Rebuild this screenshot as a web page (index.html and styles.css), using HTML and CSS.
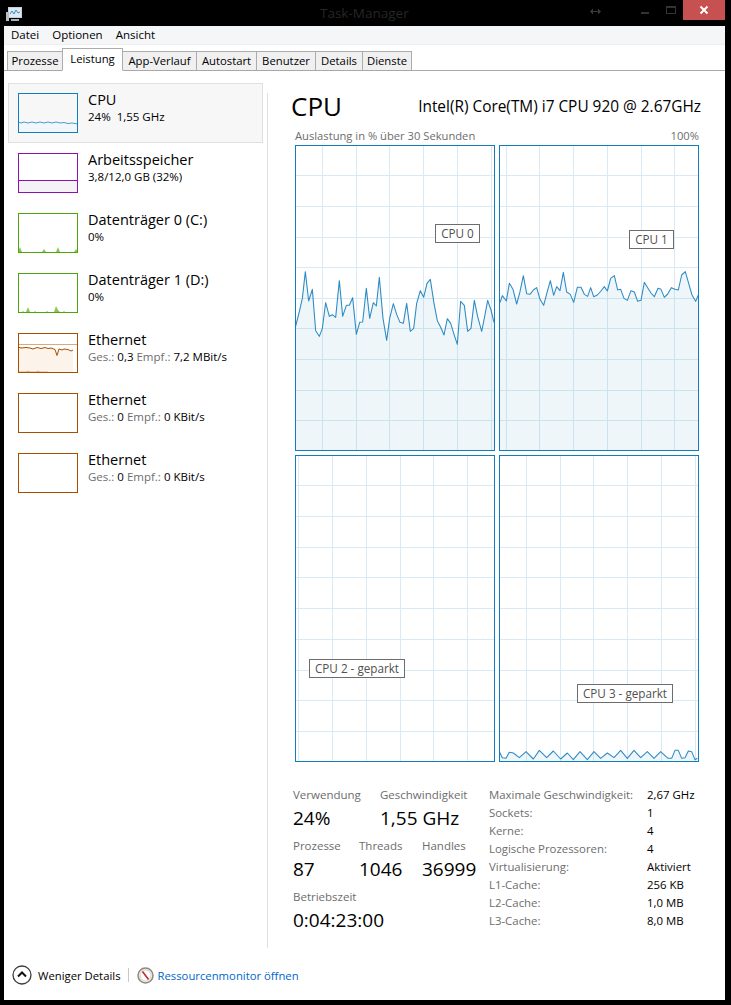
FILE: index.html
```html
<!DOCTYPE html>
<html lang="de">
<head>
<meta charset="utf-8">
<title>Task-Manager</title>
<link rel="stylesheet" href="styles.css">
</head>
<body>
<div class="window">
  <header class="titlebar">
    <svg class="app-icon" width="16" height="15" viewBox="0 0 16 15"><rect x="2.5" y="0.5" width="13" height="10" fill="#dfe8f0" stroke="#c8d0d8"/><path d="M4 7l2-3 2 3 2-4 2 3 2-1" fill="none" stroke="#3a8fc8"/><rect x="0" y="5" width="3" height="9" fill="#b9bec4"/><rect x="5" y="12" width="8" height="2" fill="#aab0b6"/></svg>
    <span class="title">Task-Manager</span>
    <svg class="resize" width="11" height="7" viewBox="0 0 11 7"><path d="M0 3.5L3 .5V3h5V.5l3 3-3 3V4H3v2.5z" fill="#3a3a3a"/></svg>
    <span class="min"></span>
    <span class="max"></span>
    <span class="close"><svg width="10" height="10" viewBox="0 0 10 10"><path d="M1.5 1.5l7 7M8.5 1.5l-7 7" stroke="#fff" stroke-width="2" fill="none"/></svg></span>
  </header>
  <main class="client">
    <nav class="menu"><span>Datei</span><span>Optionen</span><span>Ansicht</span></nav>
    <div class="tabs">
      <span class="tab">Prozesse</span>
      <span class="tab active">Leistung</span>
      <span class="tab">App-Verlauf</span>
      <span class="tab">Autostart</span>
      <span class="tab">Benutzer</span>
      <span class="tab">Details</span>
      <span class="tab">Dienste</span>
    </div>
    <div class="content">
      <aside class="sidebar">
        <div class="res selected">
          <svg class="thumb" width="60" height="40" viewBox="0 0 60 40"><path class="f-cpu" d="M0 29l3 1 3-1 4 1 4-1 4 1 4-1 4 1 4-1 4 1 4-1 4 1 4-.5 4 1 4-.5 6 1V40H0z"/><path class="l-cpu" d="M0 29l3 1 3-1 4 1 4-1 4 1 4-1 4 1 4-1 4 1 4-1 4 1 4-.5 4 1 4-.5 6 1"/><rect class="b-cpu" x=".5" y=".5" width="59" height="39"/></svg>
          <div class="res-text"><div class="res-name">CPU</div><div class="res-sub">24%&nbsp; 1,55 GHz</div></div>
        </div>
        <div class="res">
          <svg class="thumb" width="60" height="40" viewBox="0 0 60 40"><rect x="0" y="27" width="60" height="13" fill="#f4f2f4"/><path d="M0 27.5H60" stroke="#8b12ae"/><rect class="b-mem" x=".5" y=".5" width="59" height="39"/></svg>
          <div class="res-text"><div class="res-name">Arbeitsspeicher</div><div class="res-sub">3,8/12,0 GB (32%)</div></div>
        </div>
        <div class="res">
          <svg class="thumb" width="60" height="40" viewBox="0 0 60 40"><path d="M0 39l2-5 2 5h20l2-3 2 3h10l2-5 2 5h14l2-3 2 3z" fill="#8cc653"/><rect class="b-disk" x=".5" y=".5" width="59" height="39"/></svg>
          <div class="res-text"><div class="res-name">Datenträger 0 (C:)</div><div class="res-sub">0%</div></div>
        </div>
        <div class="res">
          <svg class="thumb" width="60" height="40" viewBox="0 0 60 40"><path d="M0 39h4l1-1 1 1h2l2-5 2 5h4l1-1 1 1h10l1-1 1 1h6l2-6 2 4 2 2h3l1-1 1 1h8z" fill="#8cc653"/><rect class="b-disk" x=".5" y=".5" width="59" height="39"/></svg>
          <div class="res-text"><div class="res-name">Datenträger 1 (D:)</div><div class="res-sub">0%</div></div>
        </div>
        <div class="res">
          <svg class="thumb" width="60" height="40" viewBox="0 0 60 40"><path d="M0 14l3 1 5-.5 4 .5 3 1 4-1.500 4 1 4-1 3 1 3-.5 4 1.500 2 6 2-6.500 3 1 2-1 4 .5 3 1.500 2-1V40H0z" fill="#fcf3eb"/><path d="M0 11.500H60" stroke="#d9aa7f"/><path d="M0 14l3 1 5-.5 4 .5 3 1 4-1.500 4 1 4-1 3 1 3-.5 4 1.500 2 6 2-6.500 3 1 2-1 4 .5 3 1.500 2-1" fill="none" stroke="#a74f01"/><path d="M1 39h7l2-1 2 1h6l2-1 2 1h8" fill="none" stroke="#d9aa7f"/><rect class="b-net" x=".5" y=".5" width="59" height="39"/></svg>
          <div class="res-text"><div class="res-name">Ethernet</div><div class="res-sub"><span class="dim">Ges.:</span> 0,3 <span class="dim">Empf.:</span> 7,2 MBit/s</div></div>
        </div>
        <div class="res">
          <svg class="thumb" width="60" height="40" viewBox="0 0 60 40"><rect class="b-net" x=".5" y=".5" width="59" height="39"/></svg>
          <div class="res-text"><div class="res-name">Ethernet</div><div class="res-sub"><span class="dim">Ges.:</span> 0 <span class="dim">Empf.:</span> 0 KBit/s</div></div>
        </div>
        <div class="res">
          <svg class="thumb" width="60" height="40" viewBox="0 0 60 40"><rect class="b-net" x=".5" y=".5" width="59" height="39"/></svg>
          <div class="res-text"><div class="res-name">Ethernet</div><div class="res-sub"><span class="dim">Ges.:</span> 0 <span class="dim">Empf.:</span> 0 KBit/s</div></div>
        </div>
      </aside>
      <section class="panel">
        <div class="panel-head">
          <h1>CPU</h1>
          <div class="model">Intel(R) Core(TM) i7 CPU 920 @ 2.67GHz</div>
        </div>
        <div class="caption"><span>Auslastung in % über 30 Sekunden</span><span>100%</span></div>
        <div class="charts">
          <div class="chart">
            <svg width="200" height="306" viewBox="0 0 200 306">
              <path class="grid" d="M27.5 0V306M61.500 0V306M94.500 0V306M128.500 0V306M162.500 0V306M196.500 0V306M0 30.500H200M0 61.500H200M0 92.500H200M0 122.500H200M0 153.500H200M0 183.500H200M0 214.500H200M0 245.500H200M0 275.500H200"/>
              <g transform="translate(-5 75) scale(.33333)">
                <polygon class="area" points="17,318 28,275 37,235 46,155 56,243 67,208 77,332 88,349 97,325 107,248 118,289 127,284 137,292 148,182 158,289 169,256 178,256 188,233 199,343 209,307 218,306 229,205 239,295 250,248 259,258 268,172 279,295 290,361 299,295 310,251 320,283 330,307 340,310 350,250 361,334 371,325 380,250 391,212 401,232 411,190 421,178 432,250 442,302 452,322 462,345 472,296 482,310 492,343 502,373 512,244 523,256 533,334 543,325 553,241 563,290 575,334 584,290 593,241 603,270 612,307 612,693 17,693"/>
                <polyline class="trace" points="17,318 28,275 37,235 46,155 56,243 67,208 77,332 88,349 97,325 107,248 118,289 127,284 137,292 148,182 158,289 169,256 178,256 188,233 199,343 209,307 218,306 229,205 239,295 250,248 259,258 268,172 279,295 290,361 299,295 310,251 320,283 330,307 340,310 350,250 361,334 371,325 380,250 391,212 401,232 411,190 421,178 432,250 442,302 452,322 462,345 472,296 482,310 492,343 502,373 512,244 523,256 533,334 543,325 553,241 563,290 575,334 584,290 593,241 603,270 612,307"/>
              </g>
              <rect class="frame" x=".5" y=".5" width="199" height="305"/>
            </svg>
            <span class="chart-label l0">CPU 0</span>
          </div>
          <div class="chart">
            <svg width="200" height="306" viewBox="0 0 200 306">
              <path class="grid" d="M7.500 0V306M40.500 0V306M74.500 0V306M108.500 0V306M142.500 0V306M175.500 0V306M0 30.500H200M0 61.500H200M0 92.500H200M0 122.500H200M0 153.500H200M0 183.500H200M0 214.500H200M0 245.500H200M0 275.500H200"/>
              <g transform="translate(-4 75) scale(.33333)">
                <polygon class="area" points="15,248 22,227 34,243 43,190 54,208 65,252 75,215 85,167 95,221 105,223 115,210 125,203 135,238 146,256 156,218 166,182 176,226 185,200 195,212 205,157 215,216 226,223 236,247 247,202 258,202 268,223 278,229 287,203 296,230 307,225 318,213 328,200 337,213 347,175 358,167 368,210 377,208 387,235 397,241 408,212 418,216 428,244 438,241 448,187 458,203 468,219 478,230 489,205 498,208 508,232 518,222 529,203 540,208 550,210 560,165 571,155 581,190 591,225 602,244 610,225 610,693 15,693"/>
                <polyline class="trace" points="15,248 22,227 34,243 43,190 54,208 65,252 75,215 85,167 95,221 105,223 115,210 125,203 135,238 146,256 156,218 166,182 176,226 185,200 195,212 205,157 215,216 226,223 236,247 247,202 258,202 268,223 278,229 287,203 296,230 307,225 318,213 328,200 337,213 347,175 358,167 368,210 377,208 387,235 397,241 408,212 418,216 428,244 438,241 448,187 458,203 468,219 478,230 489,205 498,208 508,232 518,222 529,203 540,208 550,210 560,165 571,155 581,190 591,225 602,244 610,225"/>
              </g>
              <rect class="frame" x=".5" y=".5" width="199" height="305"/>
            </svg>
            <span class="chart-label l1">CPU 1</span>
          </div>
          <div class="chart">
            <svg width="200" height="307" viewBox="0 0 200 307">
              <path class="grid" d="M3.500 0V307M37.500 0V307M71.500 0V307M105.500 0V307M138.500 0V307M172.500 0V307M0 30.500H200M0 61.500H200M0 92.500H200M0 122.500H200M0 153.500H200M0 184.500H200M0 215.500H200M0 245.500H200M0 276.500H200"/>
              <rect class="frame" x=".5" y=".5" width="199" height="306"/>
            </svg>
            <span class="chart-label l2">CPU 2 - geparkt</span>
          </div>
          <div class="chart">
            <svg width="200" height="307" viewBox="0 0 200 307">
              <path class="grid" d="M27.500 0V307M61.500 0V307M94.500 0V307M128.500 0V307M162.500 0V307M196.500 0V307M0 30.500H200M0 61.500H200M0 92.500H200M0 122.500H200M0 153.500H200M0 184.500H200M0 215.500H200M0 245.500H200M0 276.500H200"/>
              <g transform="translate(-4 290) scale(.33333)">
                <polygon class="area" points="14,22 22,38 33,40 43,22 55,24 73,38 93,20 115,42 133,16 155,38 175,18 197,42 217,24 235,44 255,20 277,44 297,20 317,40 337,24 357,38 377,16 397,40 417,16 437,38 457,20 477,40 497,20 519,40 530,40 540,16 550,16 560,40 570,38 580,18 590,20 600,44 607,40 607,51 14,51"/>
                <polyline class="trace" points="14,22 22,38 33,40 43,22 55,24 73,38 93,20 115,42 133,16 155,38 175,18 197,42 217,24 235,44 255,20 277,44 297,20 317,40 337,24 357,38 377,16 397,40 417,16 437,38 457,20 477,40 497,20 519,40 530,40 540,16 550,16 560,40 570,38 580,18 590,20 600,44 607,40"/>
              </g>
              <rect class="frame" x=".5" y=".5" width="199" height="306"/>
            </svg>
            <span class="chart-label l3">CPU 3 - geparkt</span>
          </div>
        </div>
        <div class="stats">
          <div class="live">
            <div class="live-row">
              <div class="stat w87"><div class="s-label">Verwendung</div><div class="s-value">24%</div></div>
              <div class="stat"><div class="s-label">Geschwindigkeit</div><div class="s-value">1,55 GHz</div></div>
            </div>
            <div class="live-row">
              <div class="stat w66"><div class="s-label">Prozesse</div><div class="s-value">87</div></div>
              <div class="stat w63"><div class="s-label">Threads</div><div class="s-value">1046</div></div>
              <div class="stat"><div class="s-label">Handles</div><div class="s-value">36999</div></div>
            </div>
            <div class="live-row">
              <div class="stat"><div class="s-label">Betriebszeit</div><div class="s-value">0:04:23:00</div></div>
            </div>
          </div>
          <dl class="specs">
            <dt>Maximale Geschwindigkeit:</dt><dd>2,67 GHz</dd>
            <dt>Sockets:</dt><dd>1</dd>
            <dt>Kerne:</dt><dd>4</dd>
            <dt>Logische Prozessoren:</dt><dd>4</dd>
            <dt>Virtualisierung:</dt><dd>Aktiviert</dd>
            <dt>L1-Cache:</dt><dd>256 KB</dd>
            <dt>L2-Cache:</dt><dd>1,0 MB</dd>
            <dt>L3-Cache:</dt><dd>8,0 MB</dd>
          </dl>
        </div>
      </section>
    </div>
    <footer class="footer">
      <svg width="20" height="20" viewBox="0 0 20 20"><circle cx="10" cy="10" r="9" fill="#fff" stroke="#3c3c3c" stroke-width="1.300"/><path d="M6 11.500l4-4 4 4" fill="none" stroke="#111" stroke-width="2"/></svg>
      <span class="less">Weniger Details</span>
      <span class="sep"></span>
      <svg width="17" height="17" viewBox="0 0 17 17"><circle cx="8.500" cy="8.500" r="7.500" fill="#f4f1ea" stroke="#8f8a80" stroke-width="1.500"/><circle cx="8.500" cy="8.500" r="5.500" fill="#fff" stroke="#d5d0c8"/><path d="M5.500 4.500l6 8" stroke="#c0272d" stroke-width="1.600"/></svg>
      <span class="link">Ressourcenmonitor öffnen</span>
    </footer>
  </main>
</div>
</body>
</html>
```

FILE: styles.css
```css
* { box-sizing: border-box; }
html, body { margin: 0; padding: 0; background: #000; }
body { font-family: "Open Sans", "Noto Sans", sans-serif; font-size: 11.5px; color: #000; }
.window { width: 731px; height: 1005px; display: flex; flex-direction: column; overflow: hidden; }

.titlebar { height: 26px; flex: none; display: flex; align-items: flex-start; padding-left: 6px; padding-right: 6px; }
.app-icon { margin-top: 7px; flex: none; }
.title { margin-left: 298px; margin-top: 4px; color: #262626; font-size: 13.500px; line-height: 18px; width: 270px; }
.resize { margin-left: 0; margin-top: 8px; flex: none; }
.min { width: 8px; height: 2px; background: #333; margin-left: 40px; margin-top: 12px; }
.max { width: 10px; height: 8px; border: 1px solid #333; border-top-width: 2px; margin-left: 17px; margin-top: 6px; }
.close { width: 42px; height: 20px; background: #c75050; margin-left: 7px; display: flex; align-items: center; justify-content: center; }

.client { flex: 1; margin: 0 6px 5px 4px; background: #fff; display: flex; flex-direction: column; min-height: 0; }
.menu { height: 19px; background: #f5f6f7; border-bottom: 1px solid #eeeeee; display: flex; gap: 13px; padding-left: 7px; font-size: 11.500px; line-height: 18px; color: #000; flex: none; }
.tabs { height: 26px; flex: none; display: grid; grid-template-columns: 55px 60px 74px 60px 59px 47px 49px; padding-left: 3px; border-bottom: 1px solid #a8a8a8; align-items: end; }
.tab { height: 20px; background: #f0f0f0; border: 1px solid #acacac; border-bottom: 1px solid #a8a8a8; margin-right: -1px; font-size: 11.300px; line-height: 17px; text-align: center; white-space: nowrap; margin-bottom: -1px; }
.tab.active { height: 23px; background: #fff; border-bottom-color: #fff; line-height: 19px; position: relative; z-index: 1; }

.content { flex: 1; display: flex; min-height: 0; padding-top: 12px; }
.sidebar { width: 263px; flex: none; padding-left: 4px; }
.res { height: 60px; width: 255px; display: flex; align-items: flex-start; padding: 9px 0 0 9px; border: 1px solid transparent; }
.res.selected { background: #f7f7f7; border-color: #e0e0e0; }
.res .thumb { flex: none; }
.res-text { margin-left: 10px; margin-top: -3px; }
.res-name { font-size: 14.500px; line-height: 20px; }
.res-sub { font-size: 11.500px; line-height: 15px; margin-top: -1px; }
.dim { color: #6d6d6d; }

.b-cpu, .b-mem, .b-disk, .b-net { fill: none; }
.b-cpu { stroke: #117dbb; }
.b-mem { stroke: #8b12ae; }
.b-disk { stroke: #4da60c; }
.b-net { stroke: #a74f01; }
.f-cpu { fill: #f1f6fa; }
.l-cpu { fill: none; stroke: #4a9cc9; }

.panel { width: 458px; flex: none; margin-top: 10px; height: 855px; border-left: 1px solid #e0e0e0; padding-left: 27px; }
.panel-head { height: 36px; width: 406px; display: flex; justify-content: space-between; align-items: flex-start; }
h1 { margin: -4px 0 0 -4px; font-size: 26px; line-height: 34px; font-weight: 400; }
.model { margin-top: 3px; font-size: 15.400px; line-height: 22px; color: #000; white-space: nowrap; }
.caption { height: 16px; width: 404px; display: flex; justify-content: space-between; color: #6d6d6d; font-size: 11.200px; line-height: 13px; }

.charts { width: 404px; display: grid; grid-template-columns: 200px 200px; grid-template-rows: 306px 307px; gap: 4px; }
.chart { position: relative; width: 200px; }
.chart svg { display: block; }
.grid { stroke: #d9eaf4; stroke-width: 1; fill: none; }
.frame { fill: none; stroke: #117dbb; stroke-width: 1; }
.area { fill: #117dbb; fill-opacity: .065; stroke: none; }
.trace { fill: none; stroke: #2d8bc3; stroke-width: 3.200; stroke-linejoin: round; }
.chart-label { position: absolute; background: #fff; border: 1px solid #6d6d6d; color: #505050; font-size: 11.700px; line-height: 17px; height: 19px; text-align: center; white-space: nowrap; }
.l0 { left: 140px; top: 79px; width: 45px; }
.l1 { left: 130px; top: 85px; width: 45px; }
.l2 { left: 14px; top: 204px; width: 96px; }
.l3 { left: 78px; top: 229px; width: 96px; }

.stats { display: flex; margin-top: 24px; margin-left: -2px; }
.live { width: 196px; flex: none; }
.live-row { display: flex; height: 51px; }
.stat { flex: none; }
.w87 { width: 87px; }
.w66 { width: 66px; }
.w63 { width: 63px; }
.s-label { color: #6d6d6d; font-size: 11.500px; line-height: 18px; white-space: nowrap; }
.s-value { font-size: 19px; line-height: 28px; white-space: nowrap; }
.specs { margin: 0; display: grid; grid-template-columns: 158px auto; grid-auto-rows: 18px; font-size: 11.400px; line-height: 18px; }
.specs dt { color: #6d6d6d; white-space: nowrap; }
.specs dd { margin: 0; white-space: nowrap; }

.footer { height: 52px; flex: none; padding-top: 2px; display: flex; align-items: center; padding-left: 8px; font-size: 11.300px; }
.less { margin-left: 6px; }
.sep { width: 1px; height: 14px; background: #c8c8c8; margin: 0 8px 0 7px; }
.link { color: #0066cc; margin-left: 4px; }
```
